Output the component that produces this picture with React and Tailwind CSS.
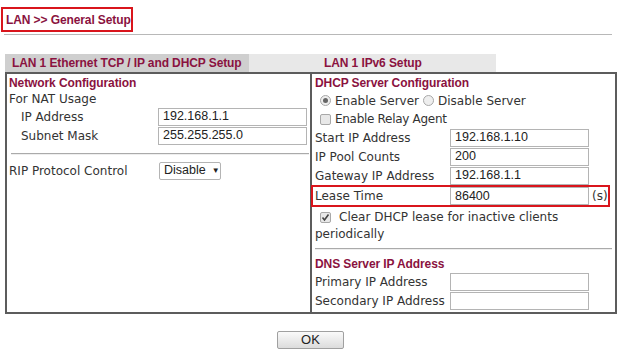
import React from "react";

const maroon = "text-[#8a1240]";
const body = "font-['DejaVu_Sans',Verdana,sans-serif] text-[12px] text-[#333] whitespace-nowrap";
const head = "font-['Liberation_Sans',Arial,sans-serif] font-bold text-[12px] tracking-[-0.1px] whitespace-nowrap";

function Input({ value = "", w = "w-[150px]" }) {
  return (
    <div className={`${w} h-[18px] border border-[#b4b4b4] bg-white px-[4px] flex items-center font-['Liberation_Sans',Arial,sans-serif] text-[12.5px] text-[#222] leading-none`}>
      {value}
    </div>
  );
}

function Radio({ checked }) {
  return (
    <span className="inline-flex w-[11px] h-[11px] rounded-full border border-[#a8a8a8] bg-[#eee] items-center justify-center mr-[4px]">
      {checked && <span className="w-[5px] h-[5px] rounded-full bg-[#666]" />}
    </span>
  );
}

function Check({ checked }) {
  return (
    <span className="inline-flex w-[11px] h-[11px] rounded-[2px] border border-[#a8a8a8] bg-[#e8e8e8] items-center justify-center">
      {checked && (
        <svg width="9" height="9" viewBox="0 0 9 9">
          <path d="M1.5 4.5 L3.5 7 L7.5 1.5" stroke="#444" strokeWidth="1.6" fill="none" />
        </svg>
      )}
    </span>
  );
}

export default function App() {
  return (
    <div className="w-[624px] h-[354px] bg-white relative overflow-hidden">
      <div className="pt-[7px] pl-[1px]">
        <div className={`w-[132px] h-[25px] border-2 border-[#d9151c] flex items-center pl-[3px] ${head} text-[12.5px] ${maroon}`}>
          LAN &gt;&gt; General Setup
        </div>
      </div>
      <div className="ml-[4px] mt-[2px] w-[608px] h-[1px] bg-[#b8b8b8]" />
      <div className={`ml-[5px] mt-[19px] flex ${head}`}>
        <div className={`w-[244px] h-[18px] bg-[#cfcfcf] pl-[7px] flex items-center ${maroon}`}>
          LAN 1 Ethernet TCP / IP and DHCP Setup
        </div>
        <div className={`w-[247px] h-[18px] bg-[#e8e8e8] flex items-center pl-[75px] ${maroon}`}>
          LAN 1 IPv6 Setup
        </div>
      </div>
      <div className={`ml-[5px] w-[612px] h-[242px] border-2 border-[#5c5c5c] flex ${body}`}>
        {/* Left column */}
        <div className="w-[305px] border-r-2 border-[#5c5c5c] pl-[2px] pr-[3px]">
          <div className={`h-[17px] flex items-center ${head} ${maroon}`}>
            Network Configuration
          </div>
          <div className="h-[16px] flex items-center">For NAT Usage</div>
          <div className="h-[19px] flex items-center">
            <span className="w-[150px] pl-[12px]">IP Address</span>
            <Input value="192.168.1.1" />
          </div>
          <div className="h-[19px] flex items-center">
            <span className="w-[150px] pl-[12px]">Subnet Mask</span>
            <Input value="255.255.255.0" />
          </div>
          <div className="mt-[8px] ml-[2px] w-[298px] h-[2px] border-t border-[#aaa] border-b border-b-[#eee]" />
          <div className="mt-[6px] h-[19px] flex items-center">
            <span className="w-[150px]">RIP Protocol Control</span>
            <div className="w-[62px] h-[18px] border border-[#b4b4b4] rounded-[2px] bg-white flex items-center pl-[4px] font-['Liberation_Sans',Arial,sans-serif] text-[12.5px] text-[#222]">
              Disable
              <span className="ml-[6px] text-[8px]">▼</span>
            </div>
          </div>
        </div>
        {/* Right column */}
        <div className="flex-1 pl-[3px] pr-[2px]">
          <div className={`h-[17px] flex items-center ${head} ${maroon}`}>
            DHCP Server Configuration
          </div>
          <div className="h-[19px] flex items-center pl-[5px]">
            <Radio checked />
            <span>Enable Server</span>
            <span className="ml-[4px]" />
            <Radio />
            <span>Disable Server</span>
          </div>
          <div className="h-[18px] flex items-center pl-[5px]">
            <Check />
            <span className="ml-[4px] tracking-[-0.3px]">Enable Relay Agent</span>
          </div>
          <div className="h-[19px] flex items-center">
            <span className="w-[135px]">Start IP Address</span>
            <Input value="192.168.1.10" w="w-[139px]" />
          </div>
          <div className="h-[19px] flex items-center">
            <span className="w-[135px]">IP Pool Counts</span>
            <Input value="200" w="w-[139px]" />
          </div>
          <div className="h-[19px] flex items-center">
            <span className="w-[135px]">Gateway IP Address</span>
            <Input value="192.168.1.1" w="w-[139px]" />
          </div>
          <div className="ml-[-4px] w-[299px] h-[22px] border-2 border-[#d9151c] flex items-center pl-[2px]">
            <span className="w-[135px]">Lease Time</span>
            <Input value="86400" w="w-[139px]" />
            <span className="ml-[3px]">(s)</span>
          </div>
          <div className="pt-[2px] leading-[17px]">
            <div className="pl-[5px] flex items-center">
              <Check checked />
              <span className="ml-[8px]">Clear DHCP lease for inactive clients</span>
            </div>
            <div>periodically</div>
          </div>
          <div className="mt-[5px] w-[297px] h-[2px] border-t border-[#aaa] border-b border-b-[#eee]" />
          <div className={`mt-[5px] h-[17px] flex items-center ${head} ${maroon}`}>
            DNS Server IP Address
          </div>
          <div className="h-[19px] flex items-center">
            <span className="w-[135px]">Primary IP Address</span>
            <Input w="w-[139px]" />
          </div>
          <div className="h-[19px] flex items-center">
            <span className="w-[135px]">Secondary IP Address</span>
            <Input w="w-[139px]" />
          </div>
        </div>
      </div>
      <div className="flex justify-start pl-[277px] mt-[17px]">
        <div className="w-[67px] h-[18px] border border-[#a0a0a0] rounded-[2px] bg-gradient-to-b from-[#fafafa] to-[#dcdcdc] flex items-center justify-center font-['Liberation_Sans',Arial,sans-serif] text-[13px] text-[#222]">
          OK
        </div>
      </div>
    </div>
  );
}
